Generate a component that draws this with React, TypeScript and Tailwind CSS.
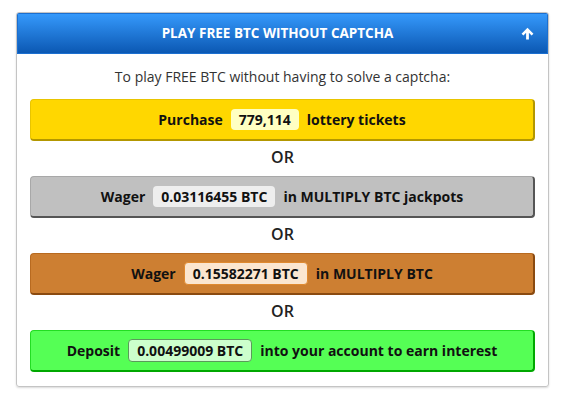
import React from 'react';

const font = { fontFamily: '"Open Sans", "Noto Sans", sans-serif' };

function Option({ box, badge, pre, value, post }: { box: string; badge: string; pre: string; value: string; post: string }) {
  return (
    <div className={`flex h-[42px] items-center justify-center gap-[8px] rounded-[4px] border border-b-2 border-r-2 text-[14px] font-bold text-[#111] ${box}`}>
      <span>{pre}</span>
      <span className={`rounded-[4px] px-[8px] leading-[21px] ${badge}`}>{value}</span>
      <span>{post}</span>
    </div>
  );
}

function Or() {
  return <div className="flex h-[35px] items-center justify-center pb-[3px] text-[16px] font-semibold text-[#222]">OR</div>;
}

export default function App() {
  return (
    <div className="min-h-[404px] w-[561px] bg-white pt-[12px] pl-[16px]" style={font}>
      <div className="w-[533px] overflow-hidden rounded-[3px] border border-[#c4c4c4] shadow-[0_1px_2px_rgba(0,0,0,0.15)]">
        <div className="relative flex h-[41px] items-center justify-center border border-[#1b6fd0] bg-gradient-to-b from-[#3599fb] to-[#0b58b3] pr-[10px] text-[13.5px] font-bold text-white">
          PLAY FREE BTC WITHOUT CAPTCHA
          <svg className="absolute right-[13px] top-[13px]" width="13" height="13" viewBox="0 0 14 14" fill="white">
            <path d="M7 0.8 L13.4 7.2 L11.4 9.2 L8.5 6.3 V13.4 H5.5 V6.3 L2.6 9.2 L0.6 7.2 Z" />
          </svg>
        </div>
        <div className="px-[13px] pt-[12px] pb-[14px]">
          <div className="mb-[11px] text-center text-[14px] leading-[22px] text-[#333]">To play FREE BTC without having to solve a captcha:</div>
          <Option box="bg-[#ffd700] border-[#e8c400] border-b-[#b39700] border-r-[#b39700]" badge="bg-[#ffffc2]" pre="Purchase" value="779,114" post="lottery tickets" />
          <Or />
          <Option box="bg-[#c0c0c0] border-[#a8a8a8] border-b-[#555] border-r-[#555]" badge="bg-[#eeeeee]" pre="Wager" value="0.03116455 BTC" post="in MULTIPLY BTC jackpots" />
          <Or />
          <Option box="bg-[#cd7f32] border-[#b86a20] border-b-[#8a4a10] border-r-[#8a4a10]" badge="bg-[#fbe6d0] border border-[#e08a30]" pre="Wager" value="0.15582271 BTC" post="in MULTIPLY BTC" />
          <Or />
          <Option box="bg-[#55ff55] border-[#22dd22] border-b-[#00a800] border-r-[#00a800]" badge="bg-[#ccffcc] border border-[#5a9a5a]" pre="Deposit" value="0.00499009 BTC" post="into your account to earn interest" />
        </div>
      </div>
    </div>
  );
}
